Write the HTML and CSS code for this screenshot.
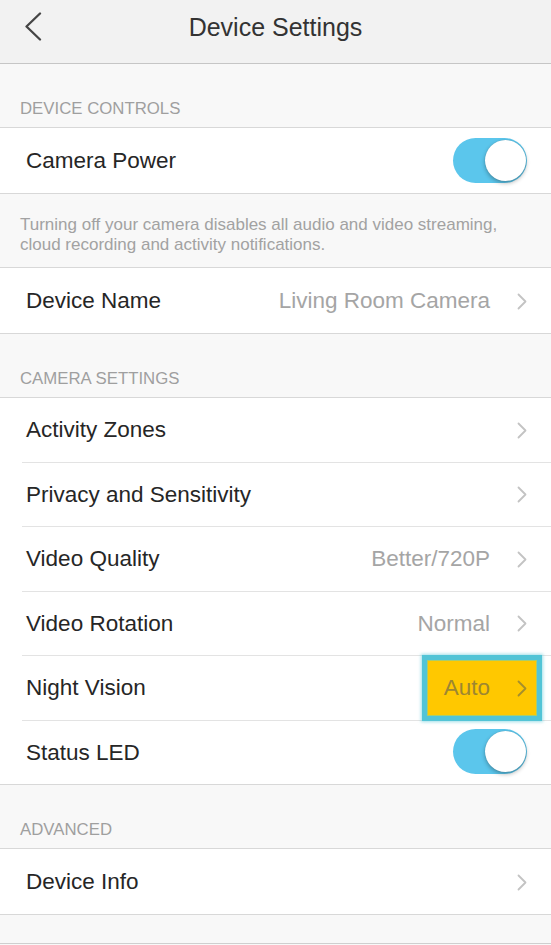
FILE: index.html
```html
<!DOCTYPE html>
<html>
<head>
<meta charset="utf-8">
<link rel="stylesheet" href="styles.css">
</head>
<body>
<div class="screen">
  <header class="topbar">
    <svg class="back" width="20" height="30" viewBox="0 0 20 30"><polyline points="16,1.5 2.5,14.5 16,27.5" fill="none" stroke="#454545" stroke-width="2.3" stroke-linecap="round" stroke-linejoin="round"/></svg>
    <h1 class="title">Device Settings</h1>
  </header>

  <div class="section-label">DEVICE CONTROLS</div>
  <div class="group">
    <div class="row">
      <span class="label">Camera Power</span>
      <span class="toggle"><span class="knob"></span></span>
    </div>
  </div>
  <div class="note">Turning off your camera disables all audio and video streaming, cloud recording and activity notifications.</div>
  <div class="group">
    <div class="row">
      <span class="label">Device Name</span>
      <span class="value">Living Room Camera</span>
      <svg class="chev" width="10" height="17" viewBox="0 0 10 17"><polyline points="1.5,1.5 8.5,8.5 1.5,15.5" fill="none" stroke="#c3c3c3" stroke-width="1.8" stroke-linecap="round" stroke-linejoin="round"/></svg>
    </div>
  </div>

  <div class="section-label">CAMERA SETTINGS</div>
  <div class="group list">
    <div class="row">
      <span class="label">Activity Zones</span>
      <svg class="chev" width="10" height="17" viewBox="0 0 10 17"><polyline points="1.5,1.5 8.5,8.5 1.5,15.5" fill="none" stroke="#c3c3c3" stroke-width="1.8" stroke-linecap="round" stroke-linejoin="round"/></svg>
    </div>
    <div class="sep"></div>
    <div class="row">
      <span class="label">Privacy and Sensitivity</span>
      <svg class="chev" width="10" height="17" viewBox="0 0 10 17"><polyline points="1.5,1.5 8.5,8.5 1.5,15.5" fill="none" stroke="#c3c3c3" stroke-width="1.8" stroke-linecap="round" stroke-linejoin="round"/></svg>
    </div>
    <div class="sep"></div>
    <div class="row">
      <span class="label">Video Quality</span>
      <span class="value">Better/720P</span>
      <svg class="chev" width="10" height="17" viewBox="0 0 10 17"><polyline points="1.5,1.5 8.5,8.5 1.5,15.5" fill="none" stroke="#c3c3c3" stroke-width="1.8" stroke-linecap="round" stroke-linejoin="round"/></svg>
    </div>
    <div class="sep"></div>
    <div class="row">
      <span class="label">Video Rotation</span>
      <span class="value">Normal</span>
      <svg class="chev" width="10" height="17" viewBox="0 0 10 17"><polyline points="1.5,1.5 8.5,8.5 1.5,15.5" fill="none" stroke="#c3c3c3" stroke-width="1.8" stroke-linecap="round" stroke-linejoin="round"/></svg>
    </div>
    <div class="sep"></div>
    <div class="row">
      <span class="label">Night Vision</span>
      <span class="highlight">
        <span class="value hl-value">Auto</span>
        <svg class="chev" width="10" height="17" viewBox="0 0 10 17"><polyline points="1.5,1.5 8.5,8.5 1.5,15.5" fill="none" stroke="#a58e2c" stroke-width="1.8" stroke-linecap="round" stroke-linejoin="round"/></svg>
      </span>
    </div>
    <div class="sep"></div>
    <div class="row">
      <span class="label">Status LED</span>
      <span class="toggle"><span class="knob"></span></span>
    </div>
  </div>

  <div class="section-label">ADVANCED</div>
  <div class="group">
    <div class="row">
      <span class="label">Device Info</span>
      <svg class="chev" width="10" height="17" viewBox="0 0 10 17"><polyline points="1.5,1.5 8.5,8.5 1.5,15.5" fill="none" stroke="#c3c3c3" stroke-width="1.8" stroke-linecap="round" stroke-linejoin="round"/></svg>
    </div>
  </div>
  <div class="footer-space"></div>
</div>
</body>
</html>
```

FILE: styles.css
```css
* { box-sizing: border-box; }
html, body { margin: 0; padding: 0; }
body {
  background: #f8f8f8;
  font-family: "Liberation Sans", Arial, sans-serif;
  color: #222;
}
.screen {
  width: 551px;
  min-height: 945px;
  background: #f8f8f8;
}
.topbar {
  height: 64px;
  background: #f2f2f2;
  border-bottom: 1px solid #c6c6c6;
  display: flex;
  align-items: center;
  justify-content: center;
  position: relative;
}
.back {
  position: absolute;
  left: 24px;
  top: 12px;
}
.title {
  margin: 0;
  font-weight: normal;
  font-size: 25px;
  color: #333;
  padding: 0 0 8px 0;
}
.section-label {
  height: 63px;
  display: flex;
  align-items: flex-end;
  padding: 0 0 8px 20px;
  font-size: 16.8px;
  line-height: 20px;
  color: #9f9f9f;
}
.group {
  background: #fff;
  border-top: 1px solid #d8d8d8;
  border-bottom: 1px solid #d8d8d8;
}
.row {
  height: 65px;
  display: flex;
  align-items: center;
  padding: 1px 24px 0 26px;
}
.list .row {
  height: 63.5px;
}
.label {
  flex: 1;
  font-size: 22.5px;
  color: #262626;
}
.value {
  font-size: 22.5px;
  color: #a5a5a5;
  margin-right: 27px;
}
.chev { display: block; }
.sep {
  height: 1px;
  background: #e3e3e3;
  margin-left: 22px;
}
.note {
  height: 73px;
  padding: 21px 30px 0 20px;
  font-size: 17px;
  line-height: 20px;
  color: #a2a2a2;
}
.toggle {
  width: 74px;
  height: 45px;
  border-radius: 23px;
  background: #5bc6ec;
  position: relative;
  display: block;
  margin-top: -2px;
}
.knob {
  position: absolute;
  right: 1px;
  top: 2px;
  width: 41px;
  height: 41px;
  border-radius: 50%;
  background: #fff;
  box-shadow: 0 2px 4px rgba(0,0,0,0.3), 0 0 1px rgba(0,0,0,0.2);
}
.highlight {
  display: flex;
  align-items: center;
  height: 54px;
  margin: -1px -9px 0 0;
  padding: 1px 9px 0 16px;
  background: #ffc800;
  box-shadow: 0 0 0 1px #a9cd6c, 0 0 0 6px #52c4d6, 0 0 3px 7px rgba(82,196,214,0.55);
}
.hl-value {
  color: #9c8632;
}
.footer-space {
  height: 29px;
  border-bottom: 1px solid #cfcfcf;
}
```
